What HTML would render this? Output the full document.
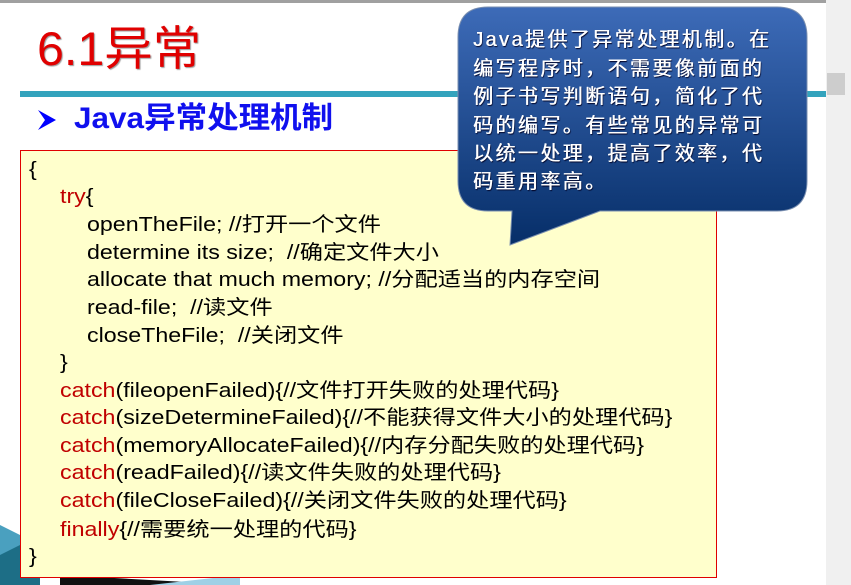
<!DOCTYPE html>
<html><head><meta charset="utf-8"><style>
body{margin:0;width:851px;height:585px;overflow:hidden;background:#fff;position:relative;font-family:"Liberation Sans","Noto Sans CJK SC",sans-serif}
.abs{position:absolute}
.code div{position:absolute;white-space:nowrap;font-size:20px;line-height:24px;color:#000;transform:scaleX(1.16);transform-origin:0 0}
.k{color:#c00000}
.bub div{position:absolute;left:473px;color:#fff;font-size:20px;line-height:24px;white-space:nowrap;letter-spacing:2.4px;text-shadow:0.5px 0 0 #fff,1px 1px 1px #002}
</style></head><body>
<div class="abs" style="left:0;top:0;width:826px;height:3px;background:#a0a0a0"></div>
<div class="abs" style="left:826px;top:0;width:25px;height:585px;background:#f0f0f0"></div>
<div class="abs" style="left:827px;top:73px;width:18px;height:22px;background:#cdcdcd"></div>
<div class="abs" style="left:37px;top:22px;font-size:47px;line-height:54px;color:#e00000;text-shadow:1px 1px 1px #999;transform:scaleX(1.03);transform-origin:0 0">6.1异常</div>
<div class="abs" style="left:20px;top:91px;width:806px;height:6px;background:#33a3bd"></div>
<svg class="abs" style="left:36px;top:108px" width="22" height="24"><polygon points="2,2 20,12 2,22 9,12" fill="#0000ff"/></svg>
<div class="abs" style="left:74px;top:100px;font-size:30px;line-height:38px;color:#1010ee;font-weight:bold;transform:scaleX(1.05);transform-origin:0 0">Java异常处理机制</div>
<svg class="abs" style="left:0;top:515px" width="240" height="70"><polygon points="0,20 40,35 40,70 0,70" fill="#1d6e86"/><polygon points="0,10 30,25 0,40" fill="#4aa0bf"/><polygon points="60,60 240,70 60,70" fill="#111"/><polygon points="150,70 240,60 240,70" fill="#9fd0e6"/></svg>
<div class="abs" style="left:20px;top:150px;width:695px;height:426px;background:#ffffcc;border:1px solid #e00000"></div>
<div class="code">
<div style="left:29px;top:158px">{</div>
<div style="left:60px;top:185px"><span class="k">try</span>{</div>
<div style="left:87px;top:213px">openTheFile; //打开一个文件</div>
<div style="left:87px;top:241px">determine its size;&nbsp; //确定文件大小</div>
<div style="left:87px;top:268px">allocate that much memory; //分配适当的内存空间</div>
<div style="left:87px;top:296px">read-file;&nbsp; //读文件</div>
<div style="left:87px;top:324px">closeTheFile;&nbsp; //关闭文件</div>
<div style="left:60px;top:351px">}</div>
<div style="left:60px;top:379px"><span class="k">catch</span>(fileopenFailed){//文件打开失败的处理代码}</div>
<div style="left:60px;top:406px"><span class="k">catch</span>(sizeDetermineFailed){//不能获得文件大小的处理代码}</div>
<div style="left:60px;top:434px"><span class="k">catch</span>(memoryAllocateFailed){//内存分配失败的处理代码}</div>
<div style="left:60px;top:461px"><span class="k">catch</span>(readFailed){//读文件失败的处理代码}</div>
<div style="left:60px;top:489px"><span class="k">catch</span>(fileCloseFailed){//关闭文件失败的处理代码}</div>
<div style="left:60px;top:518px"><span class="k">finally</span>{//需要统一处理的代码}</div>
<div style="left:29px;top:545px">}</div>
</div>
<svg class="abs" style="left:450px;top:4px" width="365" height="245">
<defs><linearGradient id="g" x1="0" y1="0" x2="0" y2="1"><stop offset="0" stop-color="#3d6bb8"/><stop offset="1" stop-color="#062e68"/></linearGradient></defs>
<path d="M38,3 H327 Q357,3 357,33 V177 Q357,207 327,207 H150 L60,241 L62,207 H38 Q8,207 8,177 V33 Q8,3 38,3 Z" fill="url(#g)" stroke="#7a8fb0" stroke-width="1"/>
</svg>
<div class="bub">
<div style="top:28px">Java提供了异常处理机制。在</div>
<div style="top:57px">编写程序时，不需要像前面的</div>
<div style="top:85px">例子书写判断语句，简化了代</div>
<div style="top:114px">码的编写。有些常见的异常可</div>
<div style="top:142px">以统一处理，提高了效率，代</div>
<div style="top:170px">码重用率高。</div>
</div>
</body></html>
